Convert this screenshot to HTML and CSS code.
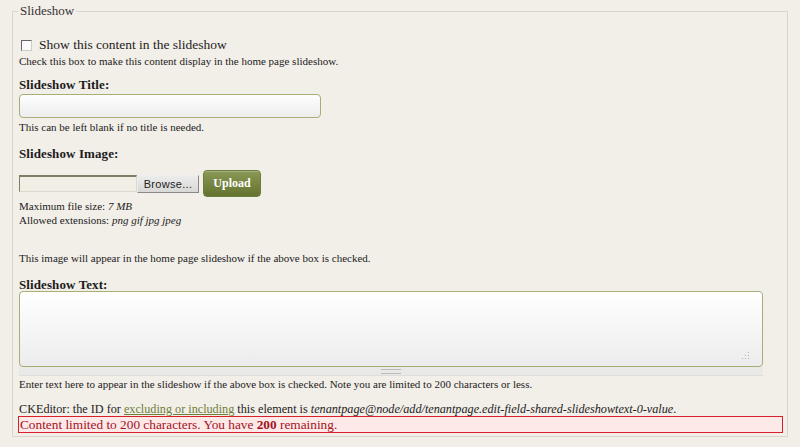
FILE: index.html
```html
<!DOCTYPE html>
<html>
<head>
<meta charset="utf-8">
<link rel="stylesheet" href="styles.css">
</head>
<body>
<fieldset class="group">
  <legend class="legend">Slideshow</legend>
  <div class="item check-item">
    <label class="check-label"><span class="checkbox"></span>Show this content in the slideshow</label>
    <div class="desc">Check this box to make this content display in the home page slideshow.</div>
  </div>
  <div class="item title-item">
    <label class="label">Slideshow Title:</label>
    <div class="text-input"></div>
    <div class="desc">This can be left blank if no title is needed.</div>
  </div>
  <div class="item image-item">
    <label class="label">Slideshow Image:</label>
    <div class="upload-row">
      <div class="file-field"></div>
      <div class="browse">Browse...</div>
      <div class="upload">Upload</div>
    </div>
    <div class="desc">Maximum file size: <em>7 MB</em></div>
    <div class="desc">Allowed extensions: <em>png gif jpg jpeg</em></div>
    <div class="desc spaced">This image will appear in the home page slideshow if the above box is checked.</div>
  </div>
  <div class="item text-item">
    <label class="label">Slideshow Text:</label>
    <div class="textarea"><span class="resize">
      <svg width="8" height="8" viewBox="0 0 8 8"><g fill="#b5b5b5"><rect x="6" y="0" width="1" height="1"/><rect x="6" y="3" width="1" height="1"/><rect x="6" y="6" width="1" height="1"/><rect x="3" y="3" width="1" height="1"/><rect x="3" y="6" width="1" height="1"/><rect x="0" y="6" width="1" height="1"/></g></svg>
    </span></div>
    <div class="grippie"><span class="grip"></span></div>
    <div class="desc">Enter text here to appear in the slideshow if the above box is checked. Note you are limited to 200 characters or less.</div>
    <div class="ck">CKEditor: the ID for <a class="link">excluding or including</a> this element is <em>tenantpage@node/add/tenantpage.edit-field-shared-slideshowtext-0-value</em>.</div>
    <div class="limit">Content limited to 200 characters. You have <strong>200</strong> remaining.</div>
  </div>
</fieldset>
</body>
</html>
```
FILE: styles.css
```css
html, body {
  margin: 0;
  padding: 0;
  background: #f2eee8;
}
body {
  font-family: "Liberation Serif", "DejaVu Serif", serif;
  color: #1c1c1c;
  width: 800px;
  height: 447px;
  overflow: hidden;
}
.group {
  margin: 3px 12px 0 12px;
  width: 776px;
  height: 434px;
  box-sizing: border-box;
  border: 1px solid #d9d5cd;
  padding: 0 0 0 6px;
}
.legend {
  font-family: "Liberation Serif", serif;
  font-size: 13px;
  color: #333;
  padding: 0 2px;
  margin-left: -1px;
}
.item { display: flex; flex-direction: column; align-items: flex-start; }
.check-item { margin-top: 17px; }
.check-label {
  font-size: 13.5px;
  display: flex;
  align-items: center;
  line-height: 18px;
}
.checkbox {
  width: 9px; height: 9px;
  border: 1px solid #666;
  border-right-color: #ccc;
  border-bottom-color: #ccc;
  background: #fbfbfb;
  margin: 0 7px 0 2px;
}
.desc {
  font-size: 11px;
  line-height: 14px;
}
.desc em { font-style: italic; }
.desc.spaced { margin-top: 24px; }
.label {
  font-weight: bold;
  font-size: 13px;
  line-height: 14px;
  letter-spacing: 0.1px;
}
.title-item { margin-top: 10px; }
.text-input {
  width: 302px;
  height: 24px;
  box-sizing: border-box;
  border: 1px solid #a7ae77;
  border-radius: 4px;
  background: linear-gradient(#fefefe, #ededed);
  margin: 2px 0 2px;
}
.image-item { margin-top: 13px; }
.upload-row {
  display: flex;
  align-items: center;
  margin: 9px 0 2px;
}
.file-field {
  width: 118px; height: 17px;
  box-sizing: border-box;
  border: 1px solid #d9d9cf;
  border-top: 2px solid #7c7e66;
  border-left: 1px solid #7c7e66;
  background: #f1eee6;
}
.browse {
  width: 62px; height: 18px;
  box-sizing: border-box;
  border: 1px solid #888;
  border-top-color: #eee;
  border-left-color: #eee;
  background: linear-gradient(#ececec, #d8d8d6);
  font-family: "Liberation Sans", Arial, sans-serif;
  font-size: 11px;
  color: #222;
  display: flex; align-items: center; justify-content: center;
  letter-spacing: 0.3px;
}
.upload {
  margin-left: 4px;
  width: 58px; height: 27px;
  box-sizing: border-box;
  border-radius: 4px;
  border: 1px solid #6d7c3f;
  background: linear-gradient(#8a9a56, #63722f);
  color: #fff;
  font-weight: bold;
  font-size: 12px;
  display: flex; align-items: center; justify-content: center;
  box-shadow: inset 0 1px 0 rgba(255,255,255,0.25);
}
.text-item { margin-top: 13px; }
.text-item .label { line-height: 13px; }
.textarea {
  position: relative;
  width: 744px;
  height: 76px;
  box-sizing: border-box;
  border: 1px solid #a7ae77;
  border-radius: 4px;
  background: linear-gradient(#ffffff, #ececec);
}
.resize { position: absolute; right: 12px; bottom: 6px; line-height: 0; }
.grippie {
  width: 744px;
  height: 8px;
  background: #e9e9e7;
  border-bottom: 1px solid #ddd;
  display: flex; justify-content: center; align-items: center;
}
.grip {
  width: 20px; height: 3px;
  border-top: 1px solid #bbb;
  border-bottom: 1px solid #bbb;
}
.text-item .desc { margin-top: 1px; }
.ck {
  margin-top: 11px;
  font-size: 12.2px;
  line-height: 14px;
}
.ck em { font-style: italic; }
.link { color: #6e7f3a; text-decoration: underline; }
.limit {
  width: 765px;
  height: 17px;
  box-sizing: border-box;
  margin-left: -1px;
  border: 1px solid #d8202b;
  background: #fde9e8;
  color: #a3121e;
  font-size: 13.3px;
  line-height: 15px;
  padding-left: 1px;
}
.limit strong { font-weight: bold; }
```
